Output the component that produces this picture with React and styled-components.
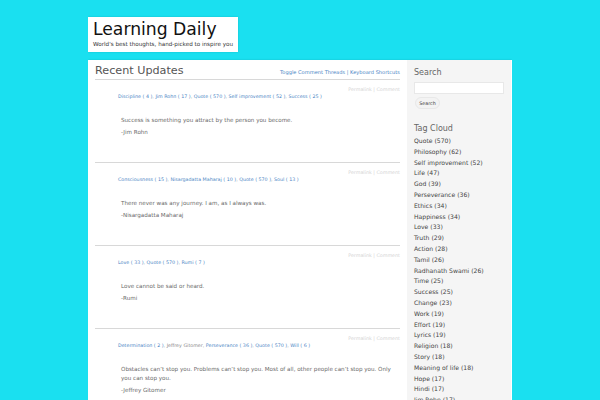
import React from "react";
import styled, { createGlobalStyle } from "styled-components";

const Global = createGlobalStyle`
  html, body { margin: 0; padding: 0; height: 400px; overflow: hidden; background: #1ae0f0; }
  body { font-family: "DejaVu Sans", sans-serif; }
  a { text-decoration: none; color: inherit; }
`;
const Page = styled.div`
  width: 424px;
  margin: 0 auto;
  padding-top: 17px;
  height: 383px;
  overflow: hidden;
`;
const Masthead = styled.header`
  width: 150px;
  height: 35px;
  background: #fff;
  box-sizing: border-box;
  padding: 2px 5px;
  margin-bottom: 8px;
  box-shadow: 0 0 2px rgba(0,0,0,.15);
`;
const SiteTitle = styled.h1`
  margin: 0 0 1px;
  font-size: 17.2px;
  line-height: 20px;
  font-weight: 400;
  color: #111;
  white-space: nowrap;
`;
const Tagline = styled.p`
  margin: 0;
  font-size: 5.65px;
  line-height: 8px;
  color: #333;
  white-space: nowrap;
`;
const Shell = styled.div`
  display: flex;
  background: #fff;
  height: 340px;
  box-shadow: 0 0 2px rgba(0,0,0,.15);
`;
const Content = styled.main`
  width: 305px;
  padding-left: 7px;
  flex: none;
`;
const ContentHead = styled.div`
  display: flex;
  justify-content: space-between;
  align-items: flex-end;
  height: 19px;
  border-bottom: 1px solid #d8d8d8;
`;
const PageTitle = styled.h2`
  margin: 0;
  font-size: 11.2px;
  line-height: 16px;
  font-weight: 400;
  color: #555;
`;
const HeadLinks = styled.div`
  font-size: 5.1px;
  line-height: 13px;
  color: #4a84c4;
`;
const Post = styled.article`
  height: ${p => p.$h}px;
  border-bottom: 1px solid #d8d8d8;
  box-sizing: border-box;
`;
const PostActions = styled.div`
  font-size: 4.8px;
  line-height: 8px;
  color: #d4d4d4;
  text-align: right;
  padding-top: 6px;
`;
const Tags = styled.div`
  font-size: 4.78px;
  line-height: 8px;
  color: #888;
  margin-left: 23px;
  margin-top: -1px;
  white-space: nowrap;
  a { color: #4a84c4; }
`;
const Body = styled.div`
  margin: 15px 0 0 26px;
  font-size: 5.6px;
  line-height: 9px;
  color: #6a6a6a;
`;
const Para = styled.p`
  margin: 0 0 3px;
`;
const Side = styled.aside`
  width: 105px;
  margin-left: 7px;
  background: #f5f5f5;
  border-right: 1px solid #fff;
  box-sizing: border-box;
  padding: 7px 7px 0 7px;
  flex: none;
`;
const SideTitle = styled.h3`
  margin: 0 0 ${p => p.$mb}px;
  font-size: 8px;
  line-height: 11px;
  font-weight: 400;
  color: #666;
`;
const SearchInput = styled.input`
  display: block;
  width: 90px;
  height: 12px;
  box-sizing: border-box;
  background: #fff;
  border: 1px solid #e8e8e8;
  padding: 0;
  margin-bottom: 3px;
`;
const SearchButton = styled.button`
  display: block;
  width: 25px;
  height: 12px;
  padding: 0;
  font: 4.8px "DejaVu Sans", sans-serif;
  color: #444;
  background: #f3f3f3;
  border: 1px solid #e8e8e8;
  border-radius: 6px;
  margin: 0 0 14px 1px;
`;
const TagList = styled.ul`
  list-style: none;
  margin: 0;
  padding: 0;
`;
const TagItem = styled.li`
  font-size: 6.1px;
  line-height: 10.8px;
  color: #444;
  white-space: nowrap;
`;

const posts = [
  { h: 83, tags: [["Discipline ( 4 )"],["Jim Rohn ( 17 )"],["Quote ( 570 )"],["Self improvement ( 52 )"],["Success ( 25 )"]],
    body: ["Success is something you attract by the person you become.", "-Jim Rohn"] },
  { h: 83, tags: [["Consciousness ( 15 )"],["Nisargadatta Maharaj ( 10 )"],["Quote ( 570 )"],["Soul ( 13 )"]],
    body: ["There never was any journey. I am, as I always was.", "-Nisargadatta Maharaj"] },
  { h: 83, tags: [["Love ( 33 )"],["Quote ( 570 )"],["Rumi ( 7 )"]],
    body: ["Love cannot be said or heard.", "-Rumi"] },
  { h: 90, tags: [["Determination ( 2 )"],["Jeffrey Gitomer", true],["Perseverance ( 36 )"],["Quote ( 570 )"],["Will ( 6 )"]],
    body: ["Obstacles can’t stop you. Problems can’t stop you. Most of all, other people can’t stop you. Only you can stop you.", "-Jeffrey Gitomer"] },
];
const cloud = ["Quote (570)","Philosophy (62)","Self improvement (52)","Life (47)","God (39)","Perseverance (36)","Ethics (34)","Happiness (34)","Love (33)","Truth (29)","Action (28)","Tamil (26)","Radhanath Swami (26)","Time (25)","Success (25)","Change (23)","Work (19)","Effort (19)","Lyrics (19)","Religion (18)","Story (18)","Meaning of life (18)","Hope (17)","Hindi (17)","Jim Rohn (17)"];

export default function App() {
  return (
    <Page>
      <Global />
      <Masthead>
        <SiteTitle>Learning Daily</SiteTitle>
        <Tagline>World's best thoughts, hand-picked to inspire you</Tagline>
      </Masthead>
      <Shell>
        <Content>
          <ContentHead>
            <PageTitle>Recent Updates</PageTitle>
            <HeadLinks><a href="#t">Toggle Comment Threads</a> | <a href="#k">Keyboard Shortcuts</a></HeadLinks>
          </ContentHead>
          {posts.map((p, i) => (
            <Post key={i} $h={p.h}>
              <PostActions>Permalink | Comment</PostActions>
              <Tags>
                {p.tags.map(([t, plain], j) => (
                  <React.Fragment key={j}>
                    {j > 0 && ", "}
                    {plain ? t : <a href="#x">{t}</a>}
                  </React.Fragment>
                ))}
              </Tags>
              <Body>{p.body.map((b, j) => <Para key={j}>{b}</Para>)}</Body>
            </Post>
          ))}
        </Content>
        <Side>
          <SideTitle $mb={4}>Search</SideTitle>
          <SearchInput />
          <SearchButton>Search</SearchButton>
          <SideTitle $mb={2}>Tag Cloud</SideTitle>
          <TagList>{cloud.map(c => <TagItem key={c}>{c}</TagItem>)}</TagList>
        </Side>
      </Shell>
    </Page>
  );
}
